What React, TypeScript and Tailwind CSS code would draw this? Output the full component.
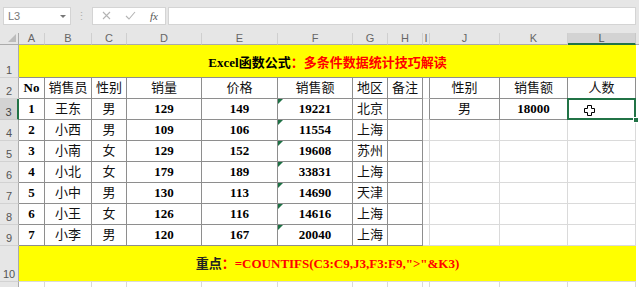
import React from 'react';

const colLetters = ['A', 'B', 'C', 'D', 'E', 'F', 'G', 'H', 'I', 'J', 'K', 'L'];

const rows: string[][] = [
  ['No', '销售员', '性别', '销量', '价格', '销售额', '地区', '备注', '', '性别', '销售额', '人数'],
  ['1', '王东', '男', '129', '149', '19221', '北京', '', '', '男', '18000', ''],
  ['2', '小西', '男', '109', '106', '11554', '上海', '', '', '', '', ''],
  ['3', '小南', '女', '129', '152', '19608', '苏州', '', '', '', '', ''],
  ['4', '小北', '女', '179', '189', '33831', '上海', '', '', '', '', ''],
  ['5', '小中', '男', '130', '113', '14690', '天津', '', '', '', '', ''],
  ['6', '小王', '女', '126', '116', '14616', '上海', '', '', '', '', ''],
  ['7', '小李', '男', '120', '167', '20040', '上海', '', '', '', '', ''],
];

function borderCls(r: number, c: number): string {
  const dark = 'border-r border-b border-r-[#8e8e8e] border-b-[#8e8e8e]';
  const light = 'border-r border-b border-r-[#dadada] border-b-[#dadada]';
  if (c <= 7) return dark;
  if (c === 8) return r <= 3 ? 'border-r border-b border-r-[#8e8e8e] border-b-[#dadada]' : light;
  if (r <= 3) return dark;
  return light;
}

function RowHead({ n, active }: { n: number; active?: boolean }) {
  return (
    <div
      className={
        active
          ? "flex items-end justify-center bg-[#d3d3d3] border-r-2 border-r-[#217346] border-b border-b-[#c8c8c8] text-[11px] leading-[13px] text-[#444] font-['Liberation_Sans',sans-serif]"
          : "flex items-end justify-center bg-[#e6e6e6] border-r border-r-[#ababab] border-b border-b-[#d2d2d2] text-[11px] leading-[13px] text-[#555] font-['Liberation_Sans',sans-serif]"
      }
    >
      {n}
    </div>
  );
}

export default function App() {
  return (
    <div className="w-[639px] h-[287px] overflow-hidden bg-white font-['Liberation_Serif','Noto_Sans_CJK_SC',serif]">
      {/* toolbar */}
      <div className="h-[33px] bg-[#e6e6e6] flex items-start pt-[7px] pl-[3px]">
        <div className="w-[68px] h-[18px] bg-white border border-[#d4d4d4] flex items-center justify-between pl-[4px] pr-[4px]">
          <span className="text-[11px] text-[#777] font-['Liberation_Sans',sans-serif]">L3</span>
          <span className="w-0 h-0 border-l-[3px] border-l-transparent border-r-[3px] border-r-transparent border-t-[3px] border-t-[#777]" />
        </div>
        <div className="w-[21px] h-[18px] flex items-center justify-center text-[11px] text-[#b0b0b0] font-['Liberation_Sans',sans-serif]">⋮</div>
        <div className="w-[74px] h-[18px] bg-white border border-[#d4d4d4] flex items-center">
          <svg width="74" height="18" viewBox="0 0 74 18">
            <path d="M10 5 L17 12 M17 5 L10 12" stroke="#b4b4b4" strokeWidth="1.1" fill="none" />
            <path d="M33 9 L36 12 L42 5" stroke="#b4b4b4" strokeWidth="1.1" fill="none" />
          </svg>
          <span className="-ml-[17px] text-[11px] italic text-[#555] font-['Liberation_Serif',serif]">fx</span>
        </div>
        <div className="ml-[2px] w-[468px] h-[18px] bg-white border border-[#d4d4d4]" />
      </div>

      <div className="grid grid-cols-[19px_26px_47px_35px_75px_76px_75px_35px_35px_7px_70px_68px_68px_3px] grid-rows-[12px_33px_repeat(8,21px)_36px_21px]">
        {/* column header row */}
        <div className="relative bg-[#e6e6e6] border-r border-r-[#ababab] border-b border-b-[#ababab]">
          <div className="absolute right-[2px] bottom-[2px] w-0 h-0 border-l-[8px] border-l-transparent border-b-[8px] border-b-[#bcbcbc]" />
        </div>
        {colLetters.map((l) =>
          l === 'L' ? (
            <div
              key={l}
              className="flex items-center justify-center bg-[#d3d3d3] border-b-2 border-b-[#217346] border-r border-r-[#c8c8c8] text-[11px] leading-none text-[#555] font-['Liberation_Sans',sans-serif]"
            >
              {l}
            </div>
          ) : (
            <div
              key={l}
              className="flex items-center justify-center bg-[#e6e6e6] border-b border-b-[#ababab] border-r border-r-[#cfcfcf] text-[11px] leading-none text-[#666] font-['Liberation_Sans',sans-serif]"
            >
              {l}
            </div>
          )
        )}
        <div className="bg-[#e6e6e6] border-b border-b-[#ababab]" />

        {/* row 1 title */}
        <RowHead n={1} />
        <div className="col-span-12 bg-[#ffff00] border-b border-b-[#8e8e8e] flex items-center justify-center text-[13px] font-bold pt-[4px]">
          <span className="text-black">Excel函数公式</span>
          <span className="text-[#ff0000]">：多条件数据统计技巧解读</span>
        </div>
        <div className="bg-white" />

        {/* rows 2-9 */}
        {rows.map((row, ri) => {
          const r = ri + 2;
          return (
            <React.Fragment key={r}>
              <RowHead n={r} active={r === 3} />
              {row.map((v, c) => {
                const bold = /^[0-9A-Za-z]+$/.test(v);
                const isSel = r === 3 && c === 11;
                const tri = c === 5 && r >= 3;
                return (
                  <div
                    key={c}
                    className={
                      borderCls(r, c) +
                      (bold
                        ? ' relative flex items-center justify-center text-[13px] font-bold text-black'
                        : ' relative flex items-center justify-center text-[13px] text-[#111]')
                    }
                  >
                    {tri && (
                      <div className="absolute top-0 left-0 w-0 h-0 border-t-[5px] border-t-[#1e7145] border-r-[5px] border-r-transparent" />
                    )}
                    {v}
                    {isSel && (
                      <>
                        <div className="absolute -left-px -top-px -right-px -bottom-px border-2 border-[#217346] z-10" />
                        <div className="absolute -right-[4px] -bottom-[4px] w-[6px] h-[6px] bg-[#217346] border border-white z-20" />
                        <svg className="absolute left-[16px] top-[6px] z-20" width="11" height="11" viewBox="0 0 11 11">
                          <path
                            d="M3.5 0.5 H7.5 V3.5 H10.5 V7.5 H7.5 V10.5 H3.5 V7.5 H0.5 V3.5 H3.5 Z"
                            fill="white"
                            stroke="black"
                            strokeWidth="1"
                          />
                        </svg>
                      </>
                    )}
                  </div>
                );
              })}
              <div className="bg-white" />
            </React.Fragment>
          );
        })}

        {/* row 10 */}
        <RowHead n={10} />
        <div className="col-span-12 bg-[#ffff00] border-b border-b-[#dadada] flex items-center justify-center text-[13px] font-bold">
          <span className="text-[#222]">重点</span>
          <span className="text-[#ff0000]">：=COUNTIFS(C3:C9,J3,F3:F9,"&gt;"&amp;K3)</span>
        </div>
        <div className="bg-white" />

        {/* row 11 */}
        <div className="flex items-start justify-center bg-[#e6e6e6] border-r border-r-[#ababab] text-[11px] leading-[13px] text-[#555] font-['Liberation_Sans',sans-serif] pt-[3px]">
          11
        </div>
        {colLetters.map((l) => (
          <div key={'r11' + l} className="border-r border-r-[#dadada] border-b border-b-[#dadada]" />
        ))}
        <div className="bg-white" />
      </div>
    </div>
  );
}
